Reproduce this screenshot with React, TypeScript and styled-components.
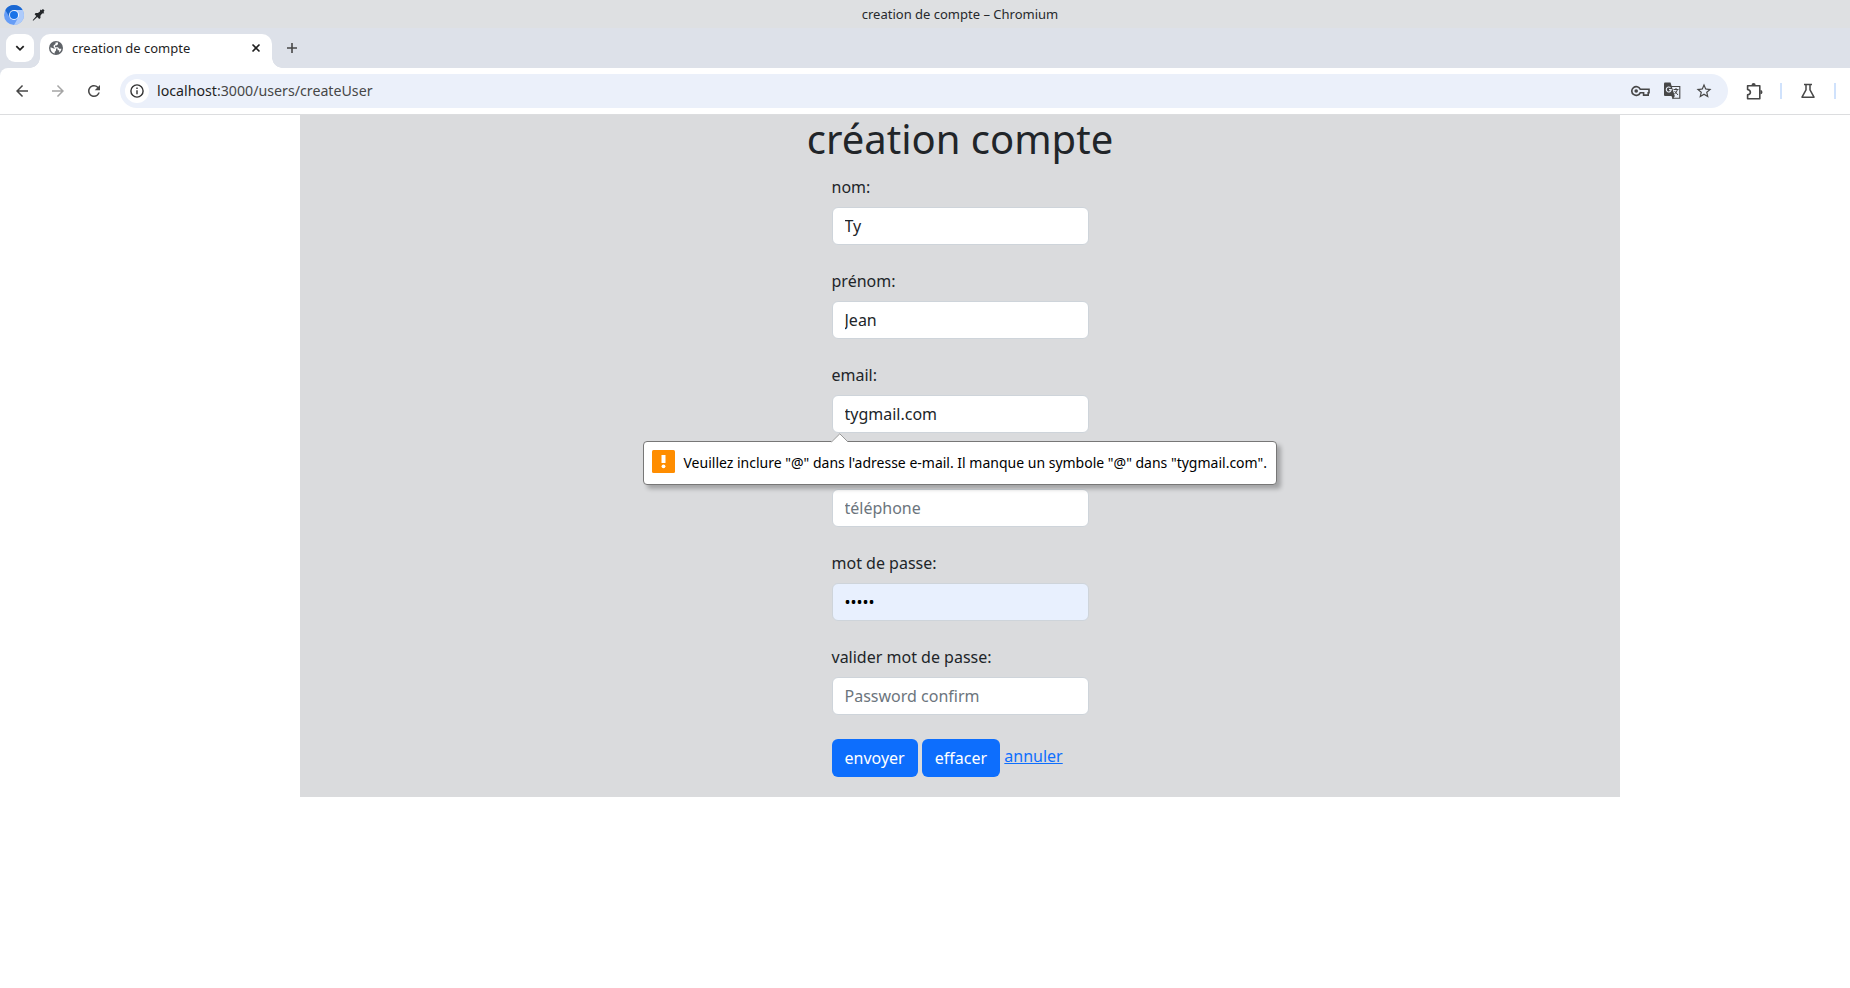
import React from 'react';
import styled, { createGlobalStyle } from 'styled-components';
import { MdArrowBack, MdArrowForward, MdRefresh, MdStarBorder } from 'react-icons/md';

const GlobalStyle = createGlobalStyle`
  *, *::before, *::after { box-sizing: border-box; }
  body {
    margin: 0;
    background: #fff;
    color: #212529;
    font: 16px/24px "Noto Sans", sans-serif;
    overflow: hidden;
  }
  svg { display: block; flex: none; }
`;

const TitleBar = styled.header`
  display: grid;
  grid-template-columns: 70px 1fr;
  height: 28px;
  background: #dee0e2;
`;
const TitleIcons = styled.div`
  display: flex;
  align-items: center;
  gap: 8px;
  padding-left: 4px;
`;
const WindowTitle = styled.div`
  display: flex;
  justify-content: center;
  font-size: 13px;
  line-height: 29px;
  color: #26292c;
`;
const TabStrip = styled.div`
  display: flex;
  align-items: flex-end;
  height: 40px;
  padding-left: 6px;
  background: #dde1e9;
`;
const TabSearch = styled.div`
  display: grid;
  place-items: center;
  width: 28px;
  height: 28px;
  margin: 0 6px 6px 0;
  border-radius: 9px;
  background: #fff;
`;
const Tab = styled.div`
  position: relative;
  display: flex;
  align-items: center;
  width: 232px;
  height: 34px;
  padding: 0 10px 6px 9px;
  border-radius: 10px 10px 0 0;
  background: #fff;
  font-size: 13px;
  color: #1f1f1f;
  &::before, &::after {
    content: '';
    position: absolute;
    bottom: 0;
    width: 10px;
    height: 10px;
  }
  &::before { left: -10px; background: radial-gradient(circle at 0 0, transparent 9.5px, #fff 10px); }
  &::after { right: -10px; background: radial-gradient(circle at 100% 0, transparent 9.5px, #fff 10px); }
`;
const TabTitle = styled.span`
  flex: 1;
  padding-left: 9px;
`;
const NewTab = styled.div`
  display: flex;
  height: 40px;
  align-items: center;
  margin-left: 13px;
`;
const ToolbarBacking = styled.div`
  background: #dde1e9;
`;
const Toolbar = styled.div`
  display: flex;
  align-items: center;
  height: 47px;
  padding: 0 0 0 13px;
  border-bottom: 1px solid #dcdddf;
  border-top-left-radius: 8px;
  background: #fff;
`;
const NavButtons = styled.div`
  display: flex;
  flex: none;
  align-items: center;
  gap: 18px;
  width: 107px;
  color: #474747;
  svg:nth-child(2) { color: #a5a5a5; }
`;
const AddressBar = styled.div`
  display: flex;
  flex: none;
  align-items: center;
  width: 1608px;
  height: 34px;
  padding: 0 15px 0 5px;
  border-radius: 17px;
  background: #ebf0fa;
  color: #474747;
`;
const SiteInfo = styled.div`
  display: grid;
  place-items: center;
  width: 24px;
  height: 24px;
  margin-right: 8px;
  border-radius: 50%;
  background: #fff;
`;
const Url = styled.div`
  flex: 1;
  padding-bottom: 1px;
  font-size: 14.2px;
  color: #474747;
`;
const Host = styled.span`
  color: #1f1f1f;
`;
const BarIcons = styled.div`
  display: flex;
  align-items: center;
  gap: 14px;
`;
const Extensions = styled.div`
  display: flex;
  flex: none;
  align-items: center;
  margin-left: 18px;
  color: #474747;
`;
const Divider = styled.i<{ $before: number }>`
  width: 2px;
  height: 16px;
  margin: 0 19px 0 ${p => p.$before}px;
  background: #d0e2fc;
`;

const PageArea = styled.div`
  padding-left: 300px;
`;
const Panel = styled.main`
  width: 1320px;
  height: 682px;
  background: #dadbdd;
`;
const Heading = styled.h1`
  margin: 0;
  height: 60px;
  font-size: 40px;
  font-weight: 400;
  line-height: 48px;
  text-align: center;
`;
const Form = styled.form`
  width: 257px;
  margin: 0 auto;
`;
const Field = styled.div`
  position: relative;
  margin-bottom: 24px;
`;
const Label = styled.label<{ $covered?: boolean }>`
  display: block;
  height: 24px;
  margin-bottom: 8px;
  visibility: ${p => (p.$covered ? 'hidden' : 'visible')};
`;
const Input = styled.input<{ $autofilled?: boolean }>`
  display: block;
  width: 100%;
  height: 38px;
  padding: 6px 12px;
  border: 1px solid #ced4da;
  border-radius: 6px;
  background: ${p => (p.$autofilled ? '#e8f0fe' : '#fff')};
  color: ${p => (p.$autofilled ? '#000' : '#212529')};
  font: inherit;
  outline: none;
  &::placeholder { color: #6c757d; opacity: 1; }
`;
const Actions = styled.div`
  display: flex;
  gap: 4px;
`;
const Button = styled.button`
  height: 38px;
  padding: 0 13px;
  border: 0;
  border-radius: 6px;
  background: #0d6efd;
  color: #fff;
  font: inherit;
`;
const Cancel = styled.a`
  padding: 5px 0 0 0.3px;
  color: #0d6efd;
  text-decoration: underline;
`;
const Bubble = styled.div`
  position: absolute;
  top: 78px;
  left: -189px;
  z-index: 1;
  display: flex;
  width: 634px;
  height: 44px;
  padding: 8px;
  border: 1px solid #777;
  border-radius: 4px;
  background: #fff;
  box-shadow: 4px 4px 4px rgba(0, 0, 0, 0.25);
  color: #000;
  font-size: 14px;
  line-height: 26px;
  white-space: nowrap;
`;
const Pointer = styled.svg`
  position: absolute;
  top: -9px;
  left: 187px;
`;
const Warning = styled.svg`
  margin-right: 9px;
`;

const ChromiumLogo = () => (
  <svg width="20" height="20" viewBox="0 0 20 20">
    <circle cx="10" cy="10" r="10" fill="#669df6" />
    <path d="M10 10V5H18.66A10 10 0 0 1 10 20l4.3-7.5z" fill="#aecbfa" />
    <path d="M1.34 5a10 10 0 0 1 17.32 0H10l-4.33 7.5z" fill="#1967d2" />
    <circle cx="10" cy="10" r="5" fill="#fff" opacity=".85" />
    <circle cx="10" cy="10" r="4" fill="#1a73e8" />
  </svg>
);
const Pin = () => (
  <svg width="14" height="14" viewBox="0 0 14 14" fill="#232629">
    <path d="M8.2 1.4 9.3 2.3 11 1l1.5 1.5-1 1.6.8 1.2-2.2.3-1.7 2.1.1 2.3-1.3 1-1.9-1.9L1.2 12.8l-.5-.5L4.3 8 2.6 6.2l1-1.2 2.3.1L8 3.6z" />
  </svg>
);
const Globe = () => (
  <svg width="14" height="14" viewBox="0 0 14 14">
    <circle cx="7" cy="7" r="7" fill="#5f6368" />
    <path d="M1.5 6.2 4.6 7.6H7v2L5.7 11v1.5A5.6 5.6 0 0 1 1.5 6.2zM6.5 1.5H9v1.7L7.4 4.5H6v1.8h3l1.2 1.5h2.3a5.6 5.6 0 0 1-2.3 3.7V9.2H8.6V7.6H6.3L4.6 6V4.4l1.9-1.5z" fill="#fff" />
  </svg>
);
const Info = () => (
  <svg width="14" height="14" viewBox="0 0 14 14" fill="none" stroke="#333" strokeWidth="1.4">
    <circle cx="7" cy="7" r="6.1" />
    <path d="M7 6.3v4M7 3.6v1.5" />
  </svg>
);
const Key = () => (
  <svg width="19" height="12" viewBox="0 0 19 12" fill="none" stroke="currentColor" strokeWidth="1.6">
    <path d="M9.2 4.2A4.4 4.4 0 1 0 9.2 7.8H12.6v2.3h4.6V7.8h.8V4.2z" />
    <circle cx="5.2" cy="6" r="1.8" fill="currentColor" stroke="none" />
  </svg>
);
const Translate = () => (
  <svg width="17" height="18" viewBox="0 0 17 18" fill="none" stroke="currentColor">
    <path d="M7 4.5h8.8v11.8H8.5" strokeWidth="1.1" />
    <path d="M0 1.5Q0 .5 1 .5h5.5L10.8 14H1q-1 0-1-1z" fill="currentColor" stroke="none" />
    <path d="m7.5 14 1.3 3.2 2-3.2z" fill="currentColor" stroke="none" />
    <path d="M6.5 5.7A2.5 2.5 0 1 0 7.3 7.6H5" stroke="#ebf0fa" strokeWidth="1.1" />
    <path d="M9.5 7.5h5M12 6v1.5M13.5 7.5q-.8 2.7-3 4.5M10.5 9l3.5 4" strokeWidth="1" />
  </svg>
);
const Puzzle = () => (
  <svg width="17" height="17" viewBox="0 0 17 17" fill="none" stroke="currentColor" strokeWidth="1.6" strokeLinejoin="round">
    <path d="M1.6 2.8H13.8V15.7H1.6V11.9Q4.4 11.2 4.4 9.2T1.6 6.5z" />
    <path d="M5.5 2.2a2.1 2.1 0 0 1 4.2 0zM14.4 7.1a2.1 2.1 0 0 1 0 4.2z" fill="currentColor" stroke="none" />
  </svg>
);
const Flask = () => (
  <svg width="14" height="16" viewBox="0 0 14 16" fill="none" stroke="currentColor" strokeWidth="1.5" strokeLinejoin="round">
    <path d="M3 1.5h8M5 1.5v5.4L1 14.2h12L9 6.9V1.5" />
  </svg>
);

interface FieldSpec {
  label: string;
  type?: string;
  value?: string;
  placeholder?: string;
  error?: string;
  covered?: boolean;
}
const fields: FieldSpec[] = [
  { label: 'nom:', value: 'Ty' },
  { label: 'prénom:', value: 'Jean' },
  { label: 'email:', value: 'tygmail.com', error: 'Veuillez inclure "@" dans l\'adresse e-mail. Il manque un symbole "@" dans "tygmail.com".' },
  { label: 'téléphone:', placeholder: 'téléphone', covered: true },
  { label: 'mot de passe:', type: 'password', value: '12345' },
  { label: 'valider mot de passe:', type: 'password', placeholder: 'Password confirm' },
];

const ErrorBubble = ({ text }: { text: string }) => (
  <Bubble role="alert">
    <Pointer width="18" height="10">
      <path d="M0 9 9 .8 17 9v1H0z" fill="#fff" />
      <path d="M.5 9 8.8.8 17 9" fill="none" stroke="#999" />
    </Pointer>
    <Warning width="23" height="23">
      <rect width="23" height="23" rx="1.5" fill="#ff8d00" />
      <path d="M9.5 5h4v8h-4z" fill="#fff" />
      <circle cx="11.5" cy="16.3" r="1.9" fill="#fff" />
    </Warning>
    <span>{text}</span>
  </Bubble>
);

export default function App() {
  return (
    <>
      <GlobalStyle />
      <TitleBar>
        <TitleIcons><ChromiumLogo /><Pin /></TitleIcons>
        <WindowTitle>creation de compte – Chromium</WindowTitle>
      </TitleBar>
      <TabStrip>
        <TabSearch>
          <svg width="10" height="10" fill="none" stroke="#1f1f1f" strokeWidth="1.8"><path d="m1.3 3.2 3.7 3.6 3.7-3.6" /></svg>
        </TabSearch>
        <Tab>
          <Globe />
          <TabTitle>creation de compte</TabTitle>
          <svg width="12" height="12" fill="none" stroke="#1f1f1f" strokeWidth="1.6"><path d="m2.5 2.5 7 7m0-7-7 7" /></svg>
        </Tab>
        <NewTab>
          <svg width="14" height="14" fill="none" stroke="#474747" strokeWidth="1.6"><path d="M7 2v10M2 7h10" /></svg>
        </NewTab>
      </TabStrip>
      <ToolbarBacking>
        <Toolbar>
          <NavButtons>
            <MdArrowBack size={18} /><MdArrowForward size={18} /><MdRefresh size={18} />
          </NavButtons>
          <AddressBar>
            <SiteInfo><Info /></SiteInfo>
            <Url><Host>localhost</Host>:3000/users/createUser</Url>
            <BarIcons><Key /><Translate /><MdStarBorder size={18} /></BarIcons>
          </AddressBar>
          <Extensions><Puzzle /><Divider $before={17} /><Flask /><Divider $before={19} /></Extensions>
        </Toolbar>
      </ToolbarBacking>
      <PageArea>
        <Panel>
          <Heading>création compte</Heading>
          <Form noValidate>
            {fields.map(f => (
              <Field key={f.label}>
                <Label $covered={f.covered}>{f.label}</Label>
                <Input type={f.type ?? 'text'} defaultValue={f.value} placeholder={f.placeholder} $autofilled={f.type === 'password' && !!f.value} />
                {f.error && <ErrorBubble text={f.error} />}
              </Field>
            ))}
            <Actions>
              <Button type="submit">envoyer</Button>
              <Button type="reset">effacer</Button>
              <Cancel>annuler</Cancel>
            </Actions>
          </Form>
        </Panel>
      </PageArea>
    </>
  );
}
